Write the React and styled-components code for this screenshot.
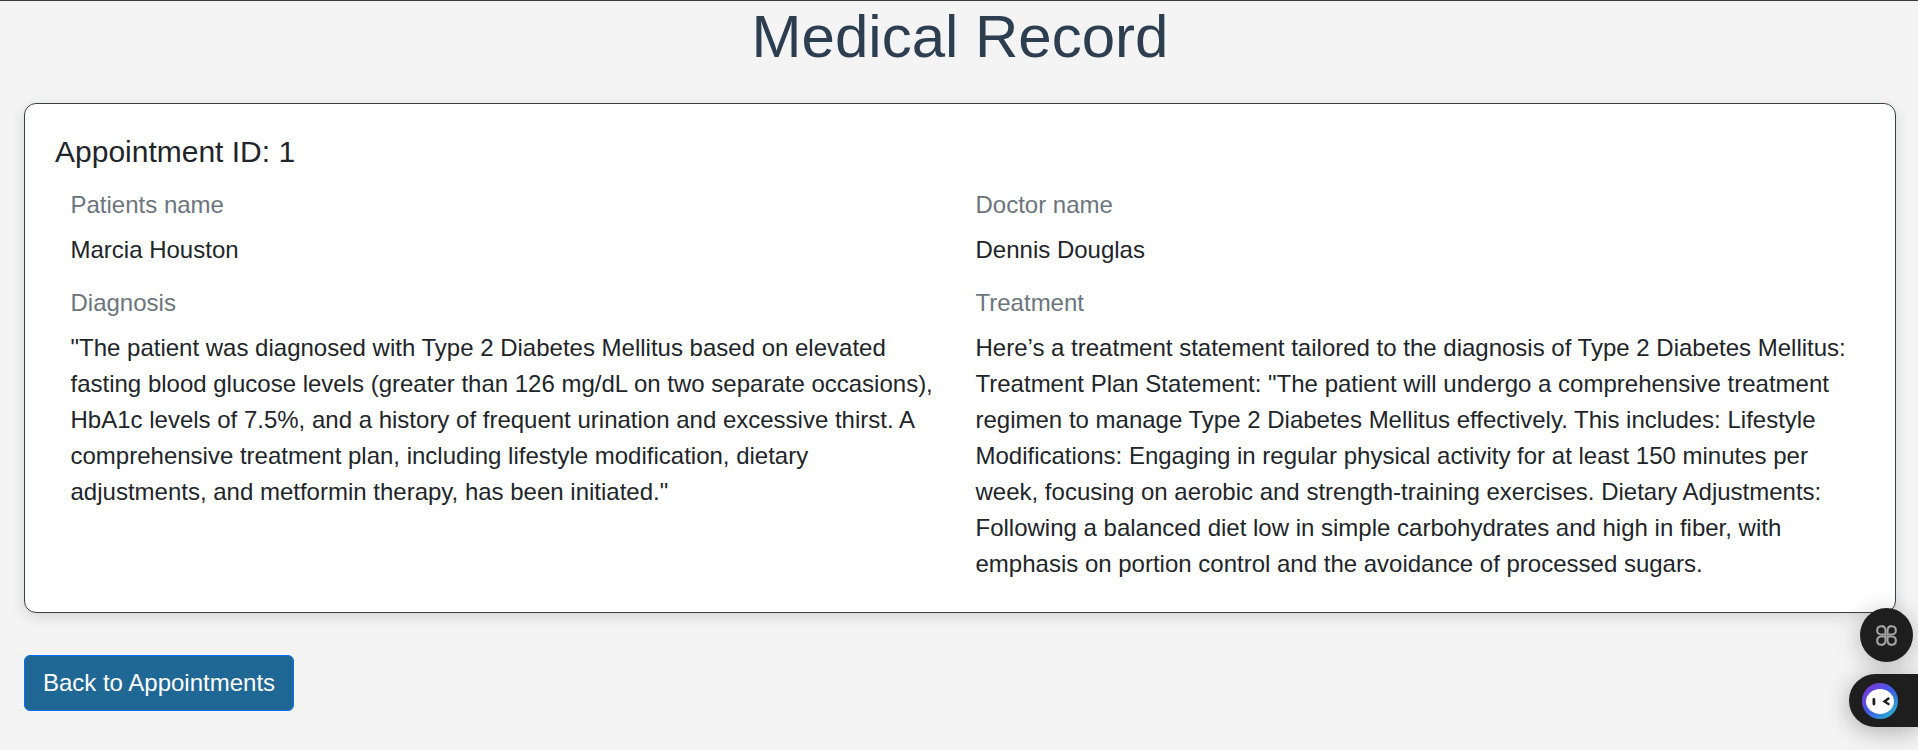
import styled, { createGlobalStyle } from "styled-components";

const GlobalStyle = createGlobalStyle`
  * {
    box-sizing: border-box;
  }
  body {
    margin: 0;
    background-color: #f4f4f4;
    font-family: "Liberation Sans", Arial, sans-serif;
    color: #212529;
  }
`;

export default function App() {
  return (
    <>
      <GlobalStyle />
      <Page>
        <Heading>Medical Record</Heading>
        <Card>
          <CardTitle>Appointment ID: 1</CardTitle>
          <Fields>
            <Field>
              <Label>Patients name</Label>
              <Value>Marcia Houston</Value>
            </Field>
            <Field>
              <Label>Doctor name</Label>
              <Value>Dennis Douglas</Value>
            </Field>
            <Field>
              <Label>Diagnosis</Label>
              <Value>
                "The patient was diagnosed with Type 2 Diabetes Mellitus based on elevated fasting blood glucose levels
                (greater than 126 mg/dL on two separate occasions), HbA1c levels of 7.5%, and a history of frequent
                urination and excessive thirst. A comprehensive treatment plan, including lifestyle modification,
                dietary adjustments, and metformin therapy, has been initiated."
              </Value>
            </Field>
            <Field>
              <Label>Treatment</Label>
              <Value>
                Here’s a treatment statement tailored to the diagnosis of Type 2 Diabetes Mellitus: Treatment Plan
                Statement: "The patient will undergo a comprehensive treatment regimen to manage Type 2 Diabetes
                Mellitus effectively. This includes: Lifestyle Modifications: Engaging in regular physical activity for
                at least 150 minutes per week, focusing on aerobic and strength-training exercises. Dietary
                Adjustments: Following a balanced diet low in simple carbohydrates and high in fiber, with emphasis on
                portion control and the avoidance of processed sugars.
              </Value>
            </Field>
          </Fields>
        </Card>
        <BackButton>Back to Appointments</BackButton>
      </Page>
      <ShortcutBubble>
        <svg width="25" height="25" viewBox="0 0 24 24" fill="none" stroke="#a3a3a3" strokeWidth="2">
          <path d="M11 11V6.5A4 4 0 1 0 6.5 11H11Z" />
          <path d="M13 11V6.5A4 4 0 1 1 17.5 11H13Z" />
          <path d="M11 13V17.5A4 4 0 1 1 6.5 13H11Z" />
          <path d="M13 13V17.5A4 4 0 1 0 17.5 13H13Z" />
        </svg>
      </ShortcutBubble>
      <AssistantTab>
        <svg width="36" height="36" viewBox="0 0 36 36">
          <defs>
            <linearGradient id="ring" x1="0" y1="0" x2="1" y2="1">
              <stop offset="0" stopColor="#8a2fd0" />
              <stop offset="0.5" stopColor="#3f5ee8" />
              <stop offset="1" stopColor="#22c4c8" />
            </linearGradient>
          </defs>
          <circle cx="18" cy="18" r="18" fill="url(#ring)" />
          <ellipse cx="18" cy="18.5" rx="14" ry="12.5" fill="#fff" />
          <rect x="10.5" y="15" width="2.8" height="7.5" rx="1.4" fill="#1e1e1e" />
          <path d="M26.5 15.5L22.5 18.5L26.5 21" fill="none" stroke="#1e1e1e" strokeWidth="2.4" strokeLinecap="round" />
        </svg>
      </AssistantTab>
    </>
  );
}

/* STYLES */
const Page = styled.main`
  min-height: 750px;
  padding: 0 22px 0 24px;
  border-top: 1px solid #3a3a3a;
`;

const Heading = styled.h1`
  margin: 0;
  padding-bottom: 30px;
  font-size: 60px;
  font-weight: 400;
  line-height: 72px;
  text-align: center;
  color: #2c3e50;
`;

const Card = styled.section`
  height: 510px;
  padding: 30px 30px 0;
  background-color: #fff;
  border: 1px solid #3a3f47;
  border-radius: 12px;
  box-shadow: 0 4px 15px rgba(0, 0, 0, 0.12);
`;

const CardTitle = styled.h5`
  margin: 0 0 17px;
  font-size: 30px;
  font-weight: 400;
  line-height: 36px;
`;

const Fields = styled.div`
  display: grid;
  grid-template-columns: 905px 905px;
`;

const Field = styled.div`
  padding: 0 15.5px;
`;

const Label = styled.div`
  font-size: 24px;
  line-height: 36px;
  color: #6c757d;
`;

const Value = styled.p`
  margin: 9px 0 17px;
  font-size: 24px;
  line-height: 36px;
  color: #212529;
`;

const BackButton = styled.button`
  display: block;
  margin-top: 42px;
  width: 270px;
  height: 56px;
  padding: 0;
  font-family: inherit;
  font-size: 24px;
  color: #fff;
  background-color: #1f6795;
  border: 1px solid #0d6efd;
  border-radius: 6px;
`;

const ShortcutBubble = styled.div`
  position: fixed;
  top: 608px;
  right: 5px;
  width: 53px;
  height: 54px;
  display: flex;
  align-items: center;
  justify-content: center;
  background-color: #1e1e1e;
  border-radius: 50%;
  box-shadow: 0 4px 24px rgba(0, 0, 0, 0.25);
`;

const AssistantTab = styled.div`
  position: fixed;
  top: 674px;
  right: 0;
  width: 69px;
  height: 53px;
  display: flex;
  align-items: center;
  padding-left: 13px;
  background-color: #1e1e1e;
  border-radius: 27px 0 0 27px;
  box-shadow: 0 4px 24px rgba(0, 0, 0, 0.3);
`;
